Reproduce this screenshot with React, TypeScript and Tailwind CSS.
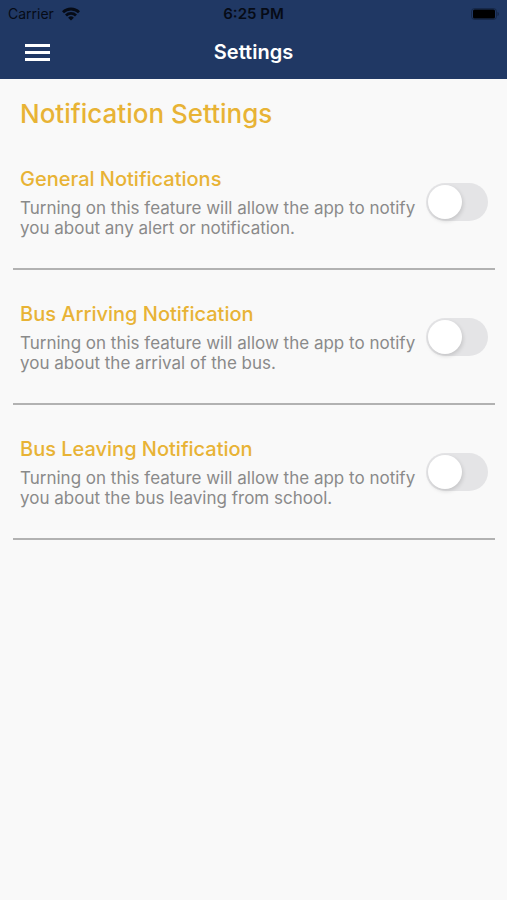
import { useState } from "react";

const items = [
  {
    id: "general",
    title: "General Notifications",
    text: "Turning on this feature will allow the app to notify you about any alert or notification.",
  },
  {
    id: "arriving",
    title: "Bus Arriving Notification",
    text: "Turning on this feature will allow the app to notify you about the arrival of the bus.",
  },
  {
    id: "leaving",
    title: "Bus Leaving Notification",
    text: "Turning on this feature will allow the app to notify you about the bus leaving from school.",
  },
];

function StatusBar() {
  return (
    <div className="grid h-7 grid-cols-[1fr_auto_1fr] items-center px-2 text-sm text-[#060b16]">
      <div className="flex items-center gap-2">
        <span>Carrier</span>
        <svg className="h-[14px] w-[18px]" viewBox="0 0 18 14" fill="none" stroke="currentColor" strokeWidth="2.8" aria-hidden="true">
          <path d="M1 5.300a11.400 11.400 0 0 1 16 0" />
          <path d="M4 8.500a7.100 7.100 0 0 1 10 0" />
          <path d="M9 13.600 6.100 10.700a4.100 4.100 0 0 1 5.800 0z" fill="currentColor" stroke="none" />
        </svg>
      </div>
      <span className="text-[15px] font-semibold">6:25 PM</span>
      <svg className="h-3 w-7 justify-self-end" viewBox="0 0 28 12" aria-hidden="true">
        <rect x="0.5" y="0.5" width="25" height="11" rx="3" fill="none" stroke="#060b16" strokeOpacity="0.35" />
        <rect x="2" y="1.500" width="22" height="9" rx="1.500" fill="#000" />
        <path d="M26.500 4v4c.9-.3 1.400-1 1.400-2s-.5-1.700-1.400-2z" fill="#060b16" fillOpacity="0.4" />
      </svg>
    </div>
  );
}

function Setting({ id, title, text }: { id: string; title: string; text: string }) {
  const [on, setOn] = useState(false);
  return (
    <li className="flex items-start border-b-2 border-[#b2b2b2] px-[7px] pt-7 pb-[30px]">
      <label htmlFor={id} className="min-w-0 flex-1 pr-2">
        <span className="block text-xl leading-8 font-medium text-[#e8b335]">{title}</span>
        <span className="mt-[3px] block text-[17px] leading-5 text-[#8a8a8a]">{text}</span>
      </label>
      <span className="relative mt-5 flex shrink-0">
        <input
          id={id}
          type="checkbox"
          role="switch"
          checked={on}
          onChange={(e) => setOn(e.target.checked)}
          className="peer h-[38px] w-[62px] cursor-pointer appearance-none rounded-full bg-[#e4e4e6] checked:bg-[#e8b335]"
        />
        <span className="pointer-events-none absolute top-0.5 left-0.5 size-[34px] rounded-full bg-white shadow-[1px_2px_4px_rgba(0,0,0,0.14)] peer-checked:translate-x-6" />
      </span>
    </li>
  );
}

export default function App() {
  return (
    <div className="min-h-screen bg-[#f9f9f9] font-[Inter,sans-serif]">
      <header className="bg-[#203864] pb-[3px]">
        <StatusBar />
        <div className="grid h-12 grid-cols-[1fr_auto_1fr] items-center px-[25px]">
          <button type="button" aria-label="Menu" className="flex w-[25px] cursor-pointer flex-col gap-1">
            <span className="h-[3px] w-full bg-white" />
            <span className="h-[3px] w-full bg-white" />
            <span className="h-[3px] w-full bg-white" />
          </button>
          <h1 className="text-xl font-semibold text-white">Settings</h1>
        </div>
      </header>
      <main className="pt-4 pr-3 pl-[13px]">
        <h2 className="mb-0.5 pl-[7px] text-[26px] leading-[38px] font-medium text-[#e8b335]">Notification Settings</h2>
        <ul>
          {items.map((item) => (
            <Setting key={item.id} {...item} />
          ))}
        </ul>
      </main>
    </div>
  );
}
